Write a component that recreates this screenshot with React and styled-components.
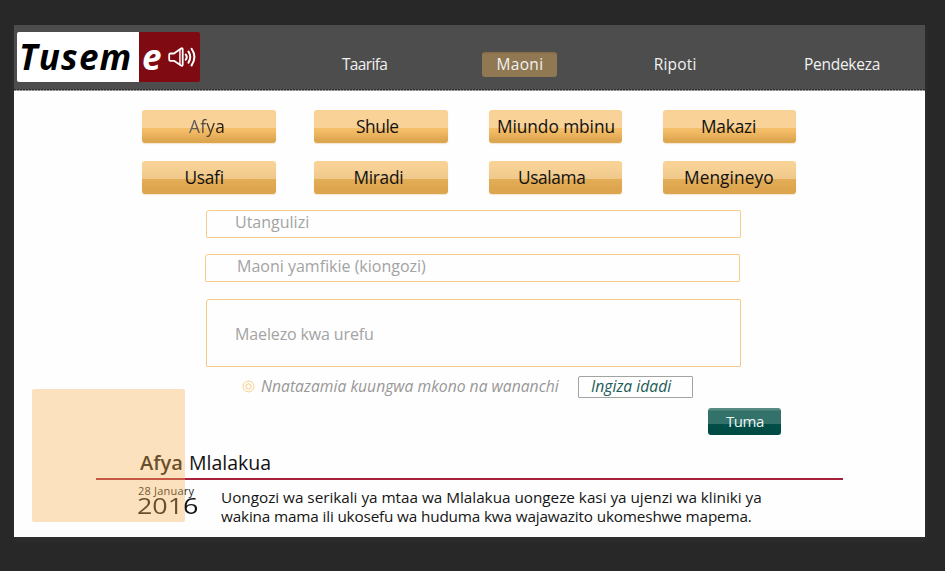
import React from "react";
import styled, { createGlobalStyle } from "styled-components";

const GlobalStyle = createGlobalStyle`
  *, *::before, *::after { box-sizing: border-box; }
  body {
    margin: 0;
    background: #282828;
    font-family: "Open Sans", "Noto Sans", sans-serif;
    overflow: hidden;
  }
  button, input, textarea { font-family: inherit; margin: 0; }
`;

const Backdrop = styled.div`
  height: 571px;
  padding: 25px 20px 34px 14px;
  background: #282828;
`;

const Page = styled.main`
  position: relative;
  display: flex;
  flex-direction: column;
  width: 911px;
  height: 512px;
  background: #fefefe;
  box-shadow: 0 3px 6px rgba(64, 64, 64, 0.45);
`;

const Header = styled.header`
  display: flex;
  flex: none;
  height: 66px;
  padding: 7px 0 0 3px;
  background:
    repeating-linear-gradient(90deg, #2f2f2f 0 2px, #626262 2px 3px) 0 64px / 100% 1px no-repeat,
    repeating-linear-gradient(90deg, #8c8c8c 0 2px, #b9b9b9 2px 3px) 0 65px / 100% 1px no-repeat,
    #4d4d4d;
`;

const Logo = styled.div`
  display: flex;
  width: 183px;
  height: 50px;
  border-radius: 2px;
  overflow: hidden;
  font-size: 35px;
  font-style: italic;
  font-weight: 700;
  line-height: 50px;
`;

const LogoWord = styled.span`
  width: 122px;
  padding-left: 2px;
  background: #fff;
  color: #000;
  letter-spacing: 1.2px;
  white-space: nowrap;
`;

const LogoEnd = styled.span`
  display: flex;
  flex: 1;
  align-items: center;
  gap: 7px;
  padding-left: 3px;
  background: #800a12;
  color: #fff;
`;

const LogoLetter = styled.span`
  width: 19px;
`;

const Nav = styled.nav`
  display: flex;
  align-items: flex-start;
  padding: 20px 0 0 128px;
`;

const NavLink = styled.a`
  display: block;
  width: ${(p) => p.$width}px;
  height: 25px;
  margin-right: ${(p) => p.$gap}px;
  padding-left: ${(p) => p.$indent}px;
  border-radius: 3px;
  background: ${(p) => (p.$active ? "linear-gradient(#846441, #907852 2px)" : "transparent")};
  color: #f1f1f1;
  font-size: 15.5px;
  line-height: 24px;
  letter-spacing: ${(p) => p.$track}px;
  white-space: nowrap;
`;

const Categories = styled.section`
  display: grid;
  grid-template-columns: 134px 134px 133px 133px;
  grid-auto-rows: 33px;
  column-gap: 39px;
  row-gap: 18px;
  padding: 19px 0 0 128px;
`;

const CategoryButton = styled.button`
  margin-left: ${(p) => p.$shift || 0}px;
  margin-right: ${(p) => -(p.$shift || 0)}px;
  padding: 0 0 0 ${(p) => p.$indent}px;
  border: 0;
  border-radius: 3px;
  background: ${(p) =>
    p.$raised
      ? "linear-gradient(#f8d091 0, #f8d297 3px, #f8d297 18px, #f4bf6c 18px, #f2ba63 22px, #dda650 30px, #dda650 33px)"
      : "linear-gradient(#f9d296 0, #f7d195 6px, #efc88a 18px, #e3ad58 18px, #dda54e 28px, #dda54e 33px)"};
  box-shadow: 0 1px 1px rgba(222, 168, 82, 0.28);
  color: #111;
  font-size: 17.3px;
  line-height: 32px;
  letter-spacing: ${(p) => p.$track}px;
  text-align: left;
  white-space: nowrap;
`;

const FadedLabel = styled.span`
  background: linear-gradient(90deg, #666 0, #44392a 60%, #15110b 100%);
  background-clip: text;
  color: transparent;
`;

const Form = styled.form`
  display: flex;
  flex-direction: column;
  width: 576px;
  margin: 16px 0 0 191px;
`;

const Field = styled.input`
  width: 535px;
  height: 28px;
  margin: 0 0 16px ${(p) => p.$left}px;
  padding: 0 10px 4px ${(p) => p.$indent}px;
  border: 1px solid #f5ce8a;
  border-radius: 3px 1px 1px 1px;
  outline: 0;
  background: #fefefe;
  font-size: 16px;
  &::placeholder { color: #a3a3a3; opacity: 1; }
`;

const Details = styled.textarea`
  display: block;
  width: 535px;
  height: 68px;
  margin: 1px 0 0 1px;
  padding: 22px 10px 0 28px;
  border: 1px solid #f3ca83;
  border-radius: 3px 1px 1px 1px;
  outline: 0;
  resize: none;
  overflow: hidden;
  background: #fefefe;
  font-size: 16px;
  line-height: 24px;
  letter-spacing: -0.13px;
  &::placeholder { color: #a3a3a3; opacity: 1; }
`;

const SupportRow = styled.div`
  display: flex;
  align-items: flex-start;
  height: 41px;
  padding: 9px 0 0 37px;
`;

const RadioMark = styled.svg`
  flex: none;
  width: 13px;
  height: 13px;
  margin-top: 4px;
`;

const SupportLabel = styled.label`
  width: 318px;
  margin-left: 6px;
  color: #989898;
  font-size: 15.7px;
  font-style: italic;
  line-height: 21px;
  white-space: nowrap;
`;

const CountInput = styled.input`
  width: 115px;
  height: 22px;
  margin-left: -1px;
  padding: 0 0 2px 12px;
  border: 1px solid #a3a39f;
  border-radius: 2px 1px 1px 1px;
  outline: 0;
  background: #fefefe;
  font-size: 15.7px;
  font-style: italic;
  &::placeholder { color: #1c5c56; opacity: 1; }
`;

const SubmitButton = styled.button`
  align-self: flex-end;
  width: 73px;
  height: 27px;
  padding: 0 0 1px 1px;
  border: 0;
  border-radius: 3px;
  background: linear-gradient(#5a8d84 0, #568a81 2px, #32726a 3px, #32726a 16px, #004f48 16px, #004a43 27px);
  color: #f0f5f4;
  font-size: 15px;
  line-height: 26px;
  letter-spacing: -0.4px;
`;

const Article = styled.article`
  width: 747px;
  margin: 16px 0 0 82px;
`;

const ArticleTitle = styled.h2`
  display: flex;
  gap: 7px;
  height: 29px;
  margin: 0;
  padding-left: 44px;
  border-bottom: 2px solid #a6213a;
  color: #111;
  font-size: 19.5px;
  font-weight: 400;
  line-height: 23px;
  white-space: nowrap;
`;

const Topic = styled.span`
  width: 42px;
  font-size: 20px;
  font-weight: 600;
`;

const ArticleBody = styled.div`
  display: flex;
  padding-top: 4px;
`;

const DateBlock = styled.time`
  display: flex;
  flex: none;
  flex-direction: column;
  width: 84px;
  padding-left: 42px;
`;

const Day = styled.span`
  height: 14px;
  color: #222;
  font-size: 11px;
  line-height: 14px;
  letter-spacing: 0.21px;
  white-space: nowrap;
`;

const Year = styled.span`
  width: 50px;
  height: 17px;
  margin-left: -1.5px;
  color: #111;
  font-size: 21.5px;
  line-height: 16px;
  transform: scaleX(1.25);
  transform-origin: 0 0;
`;

const Summary = styled.p`
  margin: 4px 0 0 41px;
  color: #151515;
  font-size: 15.3px;
  line-height: 19px;
  white-space: nowrap;
`;

const SummaryLine = styled.span`
  display: block;
  letter-spacing: ${(p) => p.$track}px;
`;

const Highlight = styled.div`
  position: absolute;
  left: 18px;
  top: 364px;
  width: 153px;
  height: 133px;
  border-radius: 2px;
  background: rgba(248, 180, 84, 0.38);
  pointer-events: none;
`;

const NAV = [
  { label: "Taarifa", width: 73, gap: 81, track: -0.67, indent: 14 },
  { label: "Maoni", width: 75, gap: 82, track: 0.3, indent: 14.6, active: true },
  { label: "Ripoti", width: 69, gap: 82, track: 0.16, indent: 14.8 },
  { label: "Pendekeza", width: 102, gap: 0, track: -0.27, indent: 14 },
];

const CATEGORIES = [
  { label: "Afya", indent: 47, track: 0.3, raised: true, faded: true },
  { label: "Shule", indent: 42, track: -0.42, raised: true, shift: -1 },
  { label: "Miundo mbinu", indent: 8, track: -0.06, raised: true, shift: 1 },
  { label: "Makazi", indent: 38, track: -0.18, raised: true, shift: 3 },
  { label: "Usafi", indent: 42.5, track: -0.28 },
  { label: "Miradi", indent: 39.6, track: -0.32, shift: -1 },
  { label: "Usalama", indent: 29, track: -0.36, shift: 1 },
  { label: "Mengineyo", indent: 21, track: 0.09, shift: 3 },
];

function SpeakerIcon() {
  return (
    <svg width="29" height="22" viewBox="0 0 29 22" fill="none" stroke="#fff" strokeWidth="1.8" strokeLinejoin="round" strokeLinecap="round">
      <path d="M2.5 7.5H6L13 2.6Q14.7 1.6 14.7 3.4V18.4Q14.7 20.4 13 19.5L6 14.8H2.5Q1.2 14.8 1.2 13.5V8.8Q1.2 7.5 2.5 7.5Z" />
      <path d="M11.9 4V18" strokeWidth="1.4" />
      <path d="M17.8 8.6Q19.8 11 17.8 13.6M20.5 5.6Q24 11 20.5 16.6M23.6 2.8Q29.2 11 23.6 19.4" strokeWidth="2" />
    </svg>
  );
}

export default function App() {
  return (
    <>
      <GlobalStyle />
      <Backdrop>
        <Page>
          <Header>
            <Logo>
              <LogoWord>Tusem</LogoWord>
              <LogoEnd>
                <LogoLetter>e</LogoLetter>
                <SpeakerIcon />
              </LogoEnd>
            </Logo>
            <Nav>
              {NAV.map((n) => (
                <NavLink key={n.label} $width={n.width} $gap={n.gap} $track={n.track} $indent={n.indent} $active={n.active}>
                  {n.label}
                </NavLink>
              ))}
            </Nav>
          </Header>
          <Categories>
            {CATEGORIES.map((c) => (
              <CategoryButton key={c.label} $indent={c.indent} $track={c.track} $raised={c.raised} $shift={c.shift}>
                {c.faded ? <FadedLabel>{c.label}</FadedLabel> : c.label}
              </CategoryButton>
            ))}
          </Categories>
          <Form onSubmit={(e) => e.preventDefault()}>
            <Field placeholder="Utangulizi" $left={1} $indent={28} />
            <Field placeholder="Maoni yamfikie (kiongozi)" $left={0} $indent={31} />
            <Details placeholder="Maelezo kwa urefu" />
            <SupportRow>
              <RadioMark viewBox="0 0 13 13" fill="none" stroke="#f6c97c">
                <circle cx="6.5" cy="6.5" r="5.4" strokeWidth="0.9" />
                <circle cx="6.5" cy="6.5" r="2.7" />
              </RadioMark>
              <SupportLabel>Nnatazamia kuungwa mkono na wananchi</SupportLabel>
              <CountInput placeholder="Ingiza idadi" />
            </SupportRow>
            <SubmitButton>Tuma</SubmitButton>
          </Form>
          <Article>
            <ArticleTitle>
              <Topic>Afya</Topic>
              <span>Mlalakua</span>
            </ArticleTitle>
            <ArticleBody>
              <DateBlock>
                <Day>28 January</Day>
                <Year>2016</Year>
              </DateBlock>
              <Summary>
                <SummaryLine $track={-0.02}>
                  Uongozi wa serikali ya mtaa wa Mlalakua uongeze kasi ya ujenzi wa kliniki ya
                </SummaryLine>
                <SummaryLine $track={-0.16}>
                  wakina mama ili ukosefu wa huduma kwa wajawazito ukomeshwe mapema.
                </SummaryLine>
              </Summary>
            </ArticleBody>
          </Article>
          <Highlight />
        </Page>
      </Backdrop>
    </>
  );
}
